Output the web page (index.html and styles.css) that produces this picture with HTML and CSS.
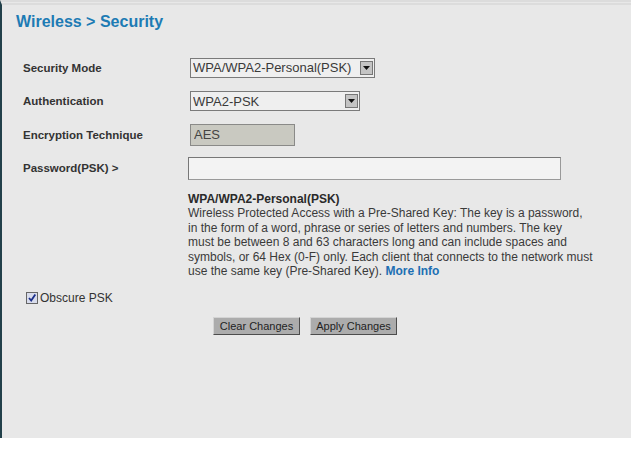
FILE: index.html
```html
<!DOCTYPE html>
<html lang="en">
<head>
    <meta charset="UTF-8">
    <meta name="viewport" content="width=device-width, initial-scale=1.0">
    <title>Wireless &gt; Security</title>
    <link rel="stylesheet" href="styles.css">
</head>
<body>
    <div class="page">
        <h1>Wireless &gt; Security</h1>

        <form id="securityForm">
            <div class="row">
                <label for="securityMode">Security Mode</label>
                <div class="select mode">
                    <select id="securityMode" name="securityMode">
                        <option>WPA/WPA2-Personal(PSK)</option>
                    </select>
                    <span class="arrow"><svg width="7" height="4" viewBox="0 0 7 4"><path d="M0 0h7L3.5 4z" fill="#111"/></svg></span>
                </div>
            </div>
            <div class="row">
                <label for="authentication">Authentication</label>
                <div class="select auth">
                    <select id="authentication" name="authentication">
                        <option>WPA2-PSK</option>
                    </select>
                    <span class="arrow"><svg width="7" height="4" viewBox="0 0 7 4"><path d="M0 0h7L3.5 4z" fill="#111"/></svg></span>
                </div>
            </div>
            <div class="row">
                <label for="encryption">Encryption Technique</label>
                <input type="text" id="encryption" class="readonly" value="AES" readonly>
            </div>
            <div class="row">
                <label for="psk">Password(PSK) &gt;</label>
                <input type="password" id="psk" class="psk" name="psk">
            </div>

            <div class="help">
                <strong>WPA/WPA2-Personal(PSK)</strong><br>
                Wireless Protected Access with a Pre-Shared Key: The key is a password,<br>
                in the form of a word, phrase or series of letters and numbers. The key<br>
                must be between 8 and 63 characters long and can include spaces and<br>
                symbols, or 64 Hex (0-F) only. Each client that connects to the network must<br>
                use the same key (Pre-Shared Key). <a href="#" class="more">More Info</a>
            </div>

            <label class="obscure">
                <span class="check"><svg width="10" height="10" viewBox="0 0 10 10"><path d="M2 5l2.2 2.6L8.3 1.5" fill="none" stroke="#1b2f8a" stroke-width="1.8"/></svg></span>
                Obscure PSK
            </label>

            <div class="actions">
                <button type="reset">Clear Changes</button>
                <button type="submit">Apply Changes</button>
            </div>
        </form>
    </div>
</body>
</html>
```

FILE: styles.css
```css
body {
    margin: 0;
    background: #fff;
    font-family: "Liberation Sans", Arial, sans-serif;
    color: #333;
}
.page {
    height: 438px;
    box-sizing: border-box;
    background: #e8e8e8;
    border-left: 2px solid #22404a;
    border-top: 5px double #dcdcdc;
    padding: 8px 0 0 14px;
    box-shadow: 0 3px 5px rgba(0, 0, 0, 0.08);
}
h1 {
    margin: 0;
    font-size: 16px;
    line-height: 18px;
    color: #1d7bb4;
}
form {
    margin: 20px 0 0 7px;
}
.row {
    display: grid;
    grid-template-columns: 167px auto;
    align-items: center;
    height: 33.5px;
}
.row label {
    font-size: 11.5px;
    font-weight: bold;
    color: #333;
}
.select {
    display: flex;
    align-items: center;
    box-sizing: border-box;
    height: 20px;
    background: #efefef;
    border: 1px solid #7a7a7a;
}
.select.mode {
    width: 185px;
}
.select.auth {
    width: 170px;
}
.select select {
    flex: 1;
    appearance: none;
    border: none;
    background: transparent;
    font-family: inherit;
    font-size: 13px;
    color: #3a3a3a;
    padding: 0 0 0 2px;
    outline: none;
}
.arrow {
    display: flex;
    align-items: center;
    justify-content: center;
    width: 13px;
    height: 14px;
    margin-right: 1px;
    background: #c4c4c4;
    border: 1px solid #777;
    box-sizing: border-box;
}
.readonly {
    box-sizing: border-box;
    width: 105px;
    height: 22px;
    padding: 0 3px;
    background: #c9c9c1;
    border: 1px solid #8a8a88;
    font-family: inherit;
    font-size: 13px;
    color: #444;
}
.psk {
    box-sizing: border-box;
    width: 373px;
    height: 23px;
    margin-left: -2px;
    background: #f3f3f3;
    border: 1px solid #999;
    border-top-color: #777;
    border-left-color: #777;
}
.help {
    margin: 6.5px 0 0 165px;
    font-size: 12px;
    line-height: 14.5px;
    color: #3a3a3a;
}
.help strong {
    color: #2a2a2a;
}
.more {
    color: #1d6fb3;
    font-weight: bold;
    text-decoration: none;
}
.obscure {
    display: flex;
    align-items: center;
    gap: 2px;
    margin: 12.5px 0 0 3px;
    font-size: 12px;
    color: #333;
}
.check {
    display: flex;
    align-items: center;
    justify-content: center;
    width: 12px;
    height: 12px;
    box-sizing: border-box;
    background: #d8dcec;
    border: 1px solid #666;
}
.actions {
    display: flex;
    gap: 10px;
    margin: 12px 0 0 190px;
}
button {
    box-sizing: border-box;
    width: 87px;
    height: 18px;
    padding: 0;
    background: #acacac;
    border: 1px solid;
    border-color: #d4d4d4 #4c4c4c #4c4c4c #d4d4d4;
    font-family: inherit;
    font-size: 11px;
    color: #1f1f1f;
}
```
